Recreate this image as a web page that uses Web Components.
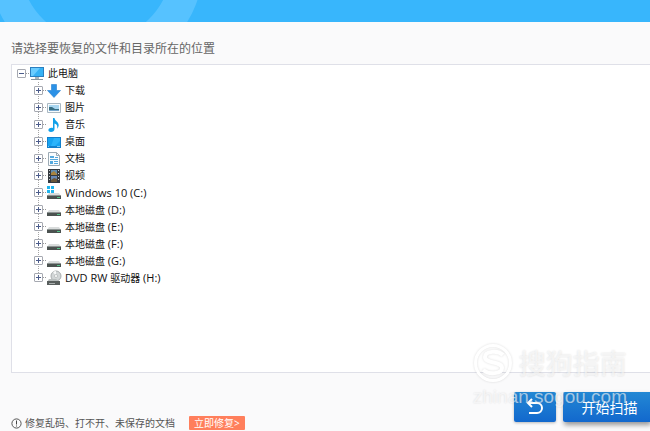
<!DOCTYPE html>
<html lang="zh-CN">
<head>
<meta charset="utf-8">
<title>恢复文件</title>
<style>
html, body { height: 100%; margin: 0; }
body { font-family: "Open Sans", "Noto Sans CJK SC", sans-serif; background: #fafafb; overflow: hidden; }
</style>
</head>
<body>
<recovery-app></recovery-app>

<script>
const define = (name, html, setup) => {
  const template = document.createElement('template');
  template.innerHTML = html;
  customElements.define(name, class extends HTMLElement {
    constructor() {
      super();
      this.attachShadow({ mode: 'open' }).append(template.content.cloneNode(true));
    }
    connectedCallback() { if (setup) setup(this, this.shadowRoot); }
  });
};

const drive = `<path d="M3 8h10l2 3H1z" fill="#d9dcdc"/><path d="M1 10h14v4H1z" fill="#4b5250"/><path d="M1 10h14v1H1z" fill="#8d9493"/><path d="M11 12h3v1h-3z" fill="#57c48b"/>`;
const icons = {
  pc: `<path d="M1 1h14v10H1z" fill="#2a7fc0"/><path d="M2 2h12v8H2z" fill="#36b2f5"/><path d="M2 2h9L4 10H2z" fill="#6accff"/><path d="M6 11h4v2H6z" fill="#aab4ba"/><path d="M2 13h12v1H2z" fill="#8796a0"/>`,
  download: `<path d="M5.500 1.500h5v6h4L8 14.500 1.500 7.500h4z" fill="#2b91e6" stroke="#2380d0" stroke-width=".6"/>`,
  picture: `<path d="M1.500 3.500h13v9h-13z" fill="#f7fbfd" stroke="#a9b8c2"/><path d="M3 5h10v6H3z" fill="#a8d6f0"/><path d="M3 7l3 0 3 2 4 0v2H3z" fill="#376e83"/><path d="M3 10h10v1H3z" fill="#77a8ce"/>`,
  music: `<path d="M7 1h1.500c.3 3 4.500 4 4.200 7.300-.1 1.500-.8 2.700-1.700 3.500.8-2.700.2-4.300-2.500-5.300V12c0 2-1.600 3-3.500 3S2 14 2.500 12.600C3 11 5 10.300 7 11z" fill="#10a0e9"/>`,
  desktop: `<path d="M1 3h14v11H1z" fill="#1280cc"/><path d="M2 4h12v8H2z" fill="#16a4f2"/><path d="M8 4h6v3L9 12H5z" fill="#2bb4fb"/><path d="M2 12h1v1H2zM11 12h3v1h-3z" fill="#7cc8f2"/>`,
  document: `<path d="M2.500 1.500h8l3 3v10h-11z" fill="#f9fcfe" stroke="#9caab4"/><path d="M10.500 1.500v3h3" fill="none" stroke="#9caab4"/><path d="M4 5h4v2H4zM9 6h3v1H9zM4 8h8v1H4zM4 10h3v3H4zM8 10h4v1H8zM8 12h4v1H8z" fill="#54a9de"/>`,
  video: `<path d="M2 1h12v14H2z" fill="#353a40"/><path d="M5 2h6v5H5z" fill="#5e8bb0"/><path d="M5 8h6v6H5z" fill="#6788b6"/><path d="M5 5l3-2 3 3v1H5z" fill="#a8833e"/><path d="M5 12l3-2 3 1v3H5z" fill="#6b5739"/><path d="M3 2h1v1H3zM3 5h1v1H3zM3 8h1v1H3zM3 11h1v1H3zM12 2h1v1h-1zM12 5h1v1h-1zM12 8h1v1h-1zM12 11h1v1h-1z" fill="#c8cdd1"/>`,
  system: drive + `<path d="M1 1h3v3H1zM5 1h3v3H5zM1 5h3v3H1zM5 5h3v3H5z" fill="#20b5ee"/>`,
  drive,
  dvd: `<circle cx="10" cy="6" r="5" fill="#d2d6d7" stroke="#a9adae"/><path d="M10 6L7 2a5 5 0 0 1 3-1z" fill="#f7f8f8"/><circle cx="10" cy="6" r="1.500" fill="#fff" stroke="#a5a9aa" stroke-width=".6"/><path d="M3 9h7l4 3H1z" fill="#b8bdbd"/><path d="M1 11h13v4H1z" fill="#585e5d"/><path d="M3 13h6v1H3z" fill="#a9aeae"/>`
};

define('tree-icon', `
<style>:host { display: block; width: 16px; height: 16px; } svg { display: block; width: 16px; height: 16px; }</style>
<svg viewBox="0 0 16 16" aria-hidden="true"></svg>`,
(host, root) => { root.querySelector('svg').innerHTML = icons[host.getAttribute('name')]; });

define('tree-item', `
<style>
:host { display: block; }
.row { display: flex; align-items: center; height: 17px; }
button { box-sizing: border-box; width: 9px; height: 9px; padding: 0; border: 1px solid #a6a9b1; border-radius: 1px; background: #fff; display: grid; place-items: center; }
button svg { display: block; width: 7px; height: 7px; }
.dots { width: 3px; border-top: 1px dotted #9a9a9a; }
.label { padding-left: 3px; font-size: 10px; line-height: 17px; color: #111; white-space: nowrap; }
.children { padding-left: 17px; background: repeating-linear-gradient(#a5a5a5 0 1px, transparent 1px 2px) 21px 0 / 1px calc(100% - 8px) no-repeat; }
</style>
<div class="row">
  <button type="button"><svg viewBox="0 0 7 7" aria-hidden="true"><path d="M1 3h5v1H1z" fill="#4c5c8b"/><path class="plus" d="M3 1h1v5H3z" fill="#4c5c8b"/></svg></button>
  <span class="dots"></span>
  <tree-icon></tree-icon>
  <span class="label"><slot></slot></span>
</div>
<div class="children" role="group"><slot name="child"></slot></div>`,
(host, root) => {
  const button = root.querySelector('button');
  const children = root.querySelector('.children');
  const icon = root.querySelector('tree-icon');
  const fresh = document.createElement('tree-icon');
  fresh.setAttribute('name', host.getAttribute('icon'));
  icon.replaceWith(fresh);
  host.setAttribute('role', 'treeitem');
  const paint = () => {
    const open = host.hasAttribute('open');
    host.setAttribute('aria-expanded', open);
    button.setAttribute('aria-label', open ? '折叠' : '展开');
    root.querySelector('.plus').style.display = open ? 'none' : '';
    children.hidden = !open;
  };
  button.onclick = () => { host.toggleAttribute('open'); paint(); };
  paint();
});

define('app-banner', `
<style>:host { display: block; height: 22px; background: #38b6fc; overflow: hidden; } svg { display: block; width: 210px; height: 22px; }</style>
<svg viewBox="0 0 210 22" aria-hidden="true"><circle cx="96" cy="-34" r="91" fill="none" stroke="#56c2ff" stroke-width="32"/></svg>`);

define('location-panel', `
<style>
:host { display: flex; flex-direction: column; }
h1 { margin: 0; font-size: 12px; line-height: 18px; font-weight: 400; color: #666; }
.box { flex: 1; margin-top: 6px; padding-left: 5px; border: 1px solid #dfe0e8; border-right: 0; background: #fff; }
</style>
<h1><slot name="title"></slot></h1>
<div class="box" role="tree"><slot></slot></div>`);

define('action-button', `
<style>
:host { display: block; }
button { box-sizing: border-box; width: 100%; height: 30px; padding: 0; border: 0; border-radius: 2px; background: linear-gradient(#2388d4, #1268cd); color: #fff; font: 14px/30px "Noto Sans CJK SC", sans-serif; display: flex; align-items: center; justify-content: center; box-shadow: 0 1px 3px #0004; }
:host([primary]) button { box-shadow: 1px 3px 5px #0006; border-radius: 2px 0 0 2px; padding-left: 6px; }
</style>
<button type="button"><slot></slot></button>`,
(host, root) => {
  const name = host.getAttribute('name');
  if (name) root.querySelector('button').setAttribute('aria-label', name);
});

define('repair-tip', `
<style>
:host { display: flex; align-items: center; font-size: 10px; line-height: 14px; color: #555; white-space: nowrap; }
svg { width: 11px; height: 11px; margin-right: 3px; }
a { margin-left: 14px; padding: 0 5px; border-radius: 1px; background: #ff7f5c; color: #fff; text-decoration: none; }
</style>
<svg viewBox="0 0 11 11" aria-hidden="true"><circle cx="5.500" cy="5.500" r="4.600" fill="none" stroke="#555"/><path d="M5 2.500h1v4H5zM5 7.500h1v1H5z" fill="#444"/></svg>
<slot></slot><a href="#repair"><slot name="link"></slot></a>`);

define('site-watermark', `
<style>
:host { display: grid; grid-template-columns: 40px auto; column-gap: 6px; justify-content: end; align-items: center; color: #fff9; text-shadow: 0 0 2px #0002; pointer-events: none; }
svg { width: 40px; height: 40px; filter: drop-shadow(0 0 1px #0002); }
.name { font: 500 27px/40px "Noto Sans CJK SC", sans-serif; }
.site { grid-column: 1 / -1; font: 19px/20px "Liberation Sans", sans-serif; margin-top: 4px; }
</style>
<svg viewBox="0 0 40 40" aria-hidden="true"><g fill="none" stroke="#fff"><circle cx="20" cy="20" r="17.500" stroke-width="3"/><path d="M30 12C25 7 12 8 12 14c0 7 17 4 17 11 0 6-13 7-19 2" stroke-width="4"/></g></svg>
<span class="name"><slot></slot></span>
<span class="site"><slot name="site"></slot></span>`);

define('recovery-app', `
<style>
:host { display: flex; flex-direction: column; height: 100vh; position: relative; }
location-panel { flex: 1; margin: 18px 0 0 11px; }
.latin { font-size: 11px; white-space: pre; }
footer { display: flex; align-items: flex-start; padding: 19px 0 1px 11px; }
repair-tip { flex: 1; margin-top: 24px; }
action-button { width: 42px; }
action-button[primary] { width: 87px; margin-left: 7px; }
action-button svg { display: block; width: 20px; height: 20px; }
site-watermark { position: absolute; right: 23px; bottom: 24px; }
</style>
<app-banner></app-banner>
<location-panel>
  <span slot="title">请选择要恢复的文件和目录所在的位置</span>
  <tree-item icon="pc" open>此电脑
    <tree-item slot="child" icon="download">下载</tree-item>
    <tree-item slot="child" icon="picture">图片</tree-item>
    <tree-item slot="child" icon="music">音乐</tree-item>
    <tree-item slot="child" icon="desktop">桌面</tree-item>
    <tree-item slot="child" icon="document">文档</tree-item>
    <tree-item slot="child" icon="video">视频</tree-item>
    <tree-item slot="child" icon="system"><span class="latin">Windows 10 (C:)</span></tree-item>
    <tree-item slot="child" icon="drive">本地磁盘<span class="latin"> (D:)</span></tree-item>
    <tree-item slot="child" icon="drive">本地磁盘<span class="latin"> (E:)</span></tree-item>
    <tree-item slot="child" icon="drive">本地磁盘<span class="latin"> (F:)</span></tree-item>
    <tree-item slot="child" icon="drive">本地磁盘<span class="latin"> (G:)</span></tree-item>
    <tree-item slot="child" icon="dvd"><span class="latin">DVD RW </span>驱动器<span class="latin"> (H:)</span></tree-item>
  </tree-item>
</location-panel>
<footer>
  <repair-tip>修复乱码、打不开、未保存的文档<span slot="link">立即修复&gt;</span></repair-tip>
  <action-button name="返回"><svg viewBox="0 0 20 20" aria-hidden="true"><path d="M7 2L3 6l4 4M3 6h9a5 5 0 0 1 0 10H4" fill="none" stroke="#fff" stroke-width="2"/></svg></action-button>
  <action-button primary>开始扫描</action-button>
</footer>
<site-watermark>搜狗指南<span slot="site">zhinan.sogou.com</span></site-watermark>`);
</script>
</body>
</html>
